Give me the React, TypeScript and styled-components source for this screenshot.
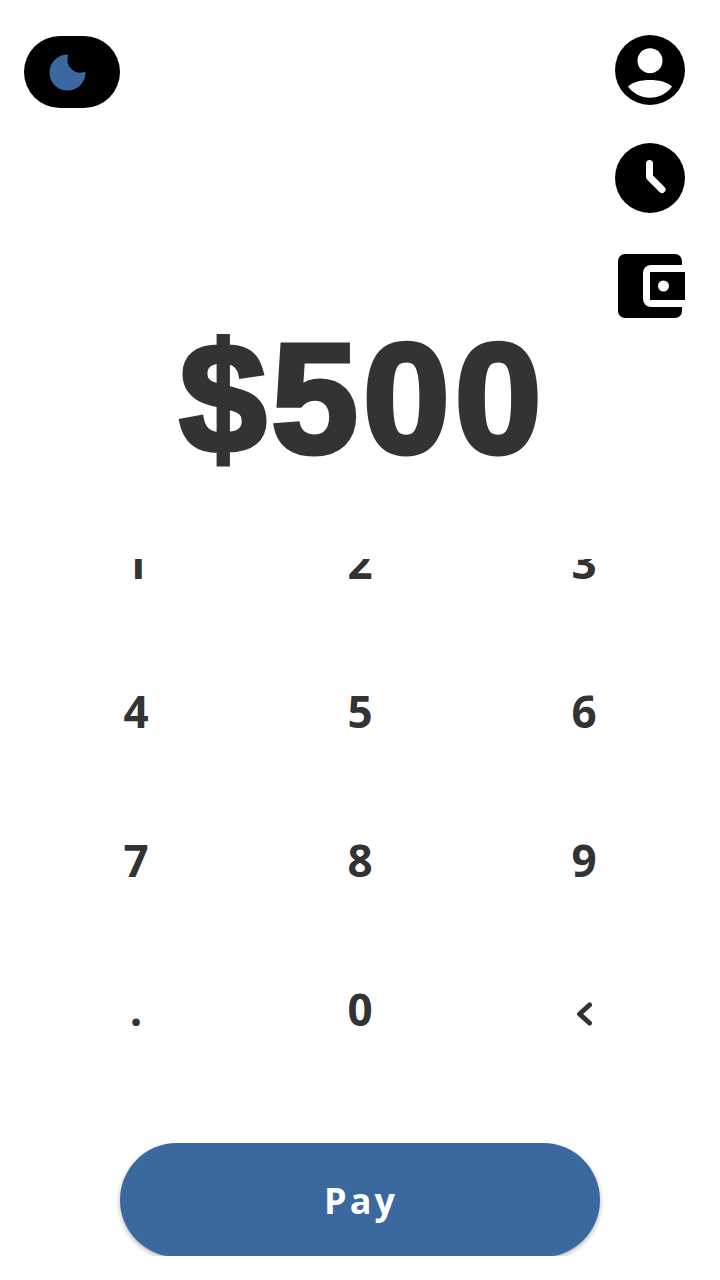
import styled, { createGlobalStyle } from "styled-components";

const Global = createGlobalStyle`
  html, body { margin: 0; padding: 0; background: #fff; }
  body { font-family: "Open Sans", sans-serif; }
`;

const keys = ["1", "2", "3", "4", "5", "6", "7", "8", "9", ".", "0"];

export default function App() {
  return (
    <Screen>
      <Global />
      <TopBar>
        <ThemeToggle>
          <svg width="48" height="48" viewBox="0 0 48 48">
            <path
              d="M23 7.500A17 17 0 1 0 40.500 25A14 14 0 0 1 23 7.500Z"
              fill="#3b699f"
              stroke="#3b699f"
              strokeWidth="2"
              strokeLinejoin="round"
            />
          </svg>
        </ThemeToggle>
        <SideIcons>
          <IconBox>
            <svg width="70" height="70" viewBox="0 0 70 70">
              <circle cx="35" cy="35" r="35" fill="#000" />
              <circle cx="35" cy="25.7" r="12.5" fill="#fff" />
              <path d="M13 51.5C18 47 26 45 35 45s17 2 22 6.500C52 58.500 44 62.700 35 62.700S18 58.500 13 51.500Z" fill="#fff" />
            </svg>
          </IconBox>
          <IconBox>
            <svg width="70" height="70" viewBox="0 0 70 70">
              <circle cx="35" cy="35" r="35" fill="#000" />
              <path d="M34.500 20.500V34L47 46.500" fill="none" stroke="#fff" strokeWidth="7" strokeLinecap="round" strokeLinejoin="round" />
            </svg>
          </IconBox>
          <IconBox>
            <svg width="70" height="70" viewBox="0 0 70 70">
              <rect x="3" y="3" width="64" height="64" rx="7" fill="#000" />
              <path d="M70 14H36a8 8 0 0 0-8 8v26a8 8 0 0 0 8 8h34Z" fill="#fff" />
              <rect x="35" y="21" width="35" height="28" fill="#000" />
              <circle cx="48.500" cy="35" r="5.500" fill="#fff" />
            </svg>
          </IconBox>
        </SideIcons>
      </TopBar>
      <Amount>$500</Amount>
      <Keypad>
        <KeyGrid>
          {keys.map((k) => (
            <Key key={k}>{k}</Key>
          ))}
          <Key>
            <BackIcon width="18" height="26" viewBox="0 0 18 26">
              <path d="M14.500 4L4.500 13l10 9" fill="none" stroke="#333" strokeWidth="5" strokeLinecap="round" strokeLinejoin="round" />
            </BackIcon>
          </Key>
        </KeyGrid>
      </Keypad>
      <PayRow>
        <PayButton>Pay</PayButton>
      </PayRow>
    </Screen>
  );
}

const Screen = styled.div`
  width: 720px;
  height: 1280px;
  overflow: hidden;
  background: #fff;
`;

const TopBar = styled.div`
  display: flex;
  justify-content: space-between;
  align-items: flex-start;
  height: 318px;
  padding: 35px 35px 0 24px;
  box-sizing: border-box;
`;

const ThemeToggle = styled.div`
  width: 96px;
  height: 72px;
  margin-top: 1px;
  border-radius: 36px;
  background: #000;
  display: flex;
  align-items: center;
  padding-left: 20px;
  box-sizing: border-box;
`;

const SideIcons = styled.div`
  display: flex;
  flex-direction: column;
  gap: 38px;
`;

const IconBox = styled.div`
  width: 70px;
  height: 70px;
  svg { display: block; }
`;

const Amount = styled.div`
  height: 246px;
  margin-top: -5px;
  padding-left: 6px;
  box-sizing: border-box;
  font-family: "Liberation Sans", Arial, sans-serif;
  font-weight: 700;
  font-size: 156px;
  line-height: 170px;
  letter-spacing: 5px;
  -webkit-text-stroke: 5px #333;
  color: #333;
  text-align: center;
`;

const Keypad = styled.div`
  height: 584px;
  overflow: hidden;
`;

const KeyGrid = styled.div`
  display: grid;
  grid-template-columns: repeat(3, 1fr);
  grid-auto-rows: 149px;
  margin-top: -72px;
  padding: 0 24px;
`;

const Key = styled.div`
  display: flex;
  align-items: center;
  justify-content: center;
  font-size: 44px;
  font-weight: 700;
  color: #333;
`;

const BackIcon = styled.svg`
  margin-top: 11px;
`;

const PayRow = styled.div`
  display: flex;
  justify-content: center;
  height: 113px;
  overflow: hidden;
`;

const PayButton = styled.div`
  width: 480px;
  height: 114px;
  flex: none;
  box-sizing: border-box;
  padding-left: 2px;
  border-radius: 57px;
  background: #3b699f;
  box-shadow: 0 2px 5px rgba(0, 0, 0, 0.3);
  color: #fff;
  font-size: 36px;
  font-weight: 700;
  letter-spacing: 3px;
  display: flex;
  align-items: center;
  justify-content: center;
`;
